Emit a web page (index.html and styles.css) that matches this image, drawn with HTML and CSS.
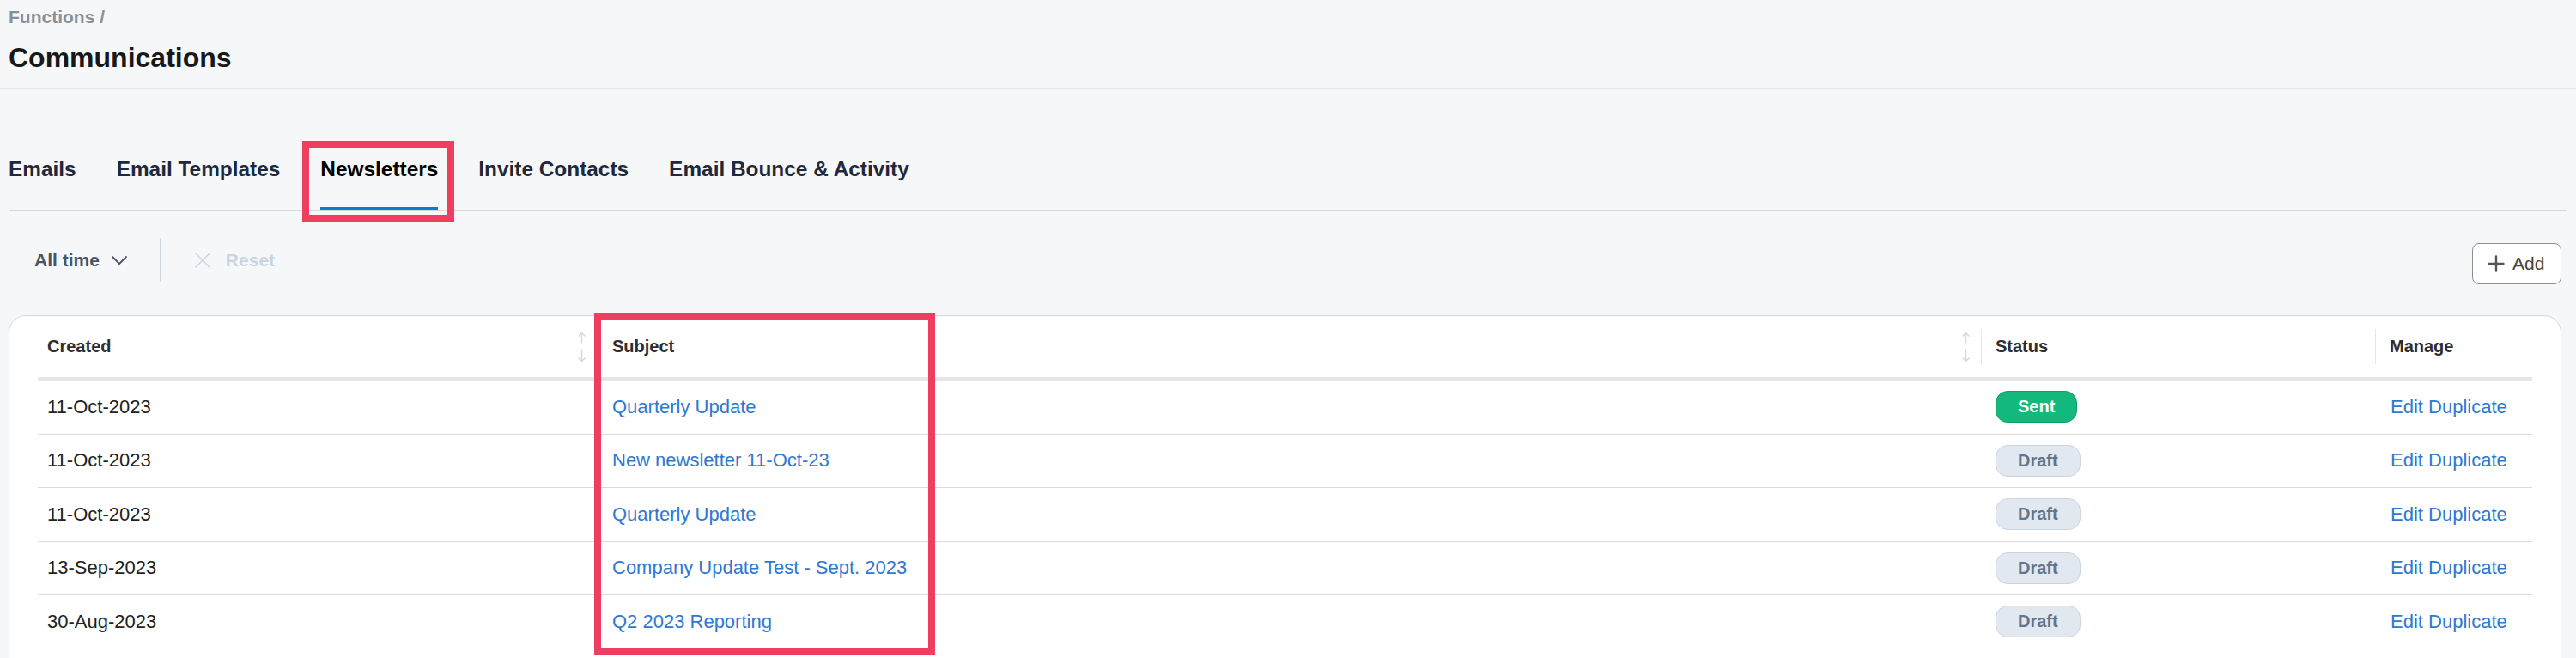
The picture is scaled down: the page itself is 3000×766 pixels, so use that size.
FILE: index.html
```html
<!DOCTYPE html>
<html lang="en">
<head>
<meta charset="utf-8">
<title>Communications</title>
<link rel="stylesheet" href="styles.css">
</head>
<body>
<header class="page-header">
  <div class="crumb">Functions /</div>
  <h1 class="title">Communications</h1>
</header>

<nav class="tabs">
  <a class="tab">Emails</a>
  <a class="tab">Email Templates</a>
  <a class="tab active">Newsletters</a>
  <a class="tab">Invite Contacts</a>
  <a class="tab">Email Bounce &amp; Activity</a>
</nav>

<div class="toolbar">
  <div class="filters">
    <span class="filter">All time
      <svg class="chev" width="18" height="10" viewBox="0 0 18 10"><polyline points="1,1 9,9 17,1" fill="none" stroke="#475569" stroke-width="1.8" stroke-linecap="round" stroke-linejoin="round"/></svg>
    </span>
    <span class="vdiv"></span>
    <span class="reset">
      <svg width="18" height="18" viewBox="0 0 18 18"><path d="M1 1 L17 17 M17 1 L1 17" stroke="#cbd5e1" stroke-width="1.6" stroke-linecap="round"/></svg>
      Reset
    </span>
  </div>
  <button class="add">
    <svg width="20" height="20" viewBox="0 0 20 20"><path d="M10 1.5 V18.5 M1.5 10 H18.5" stroke="#555" stroke-width="2.4" stroke-linecap="round"/></svg>
    Add
  </button>
</div>

<section class="card">
  <table class="grid">
    <colgroup>
      <col class="c-created">
      <col class="c-subject">
      <col class="c-status">
      <col class="c-manage">
    </colgroup>
    <thead>
      <tr>
        <th><div class="thc first">Created
          <svg class="sort" width="11" height="36" viewBox="0 0 11 36"><path d="M5.5 1.5 V13 M2 5 L5.5 1.5 L9 5 M5.5 21 V34.5 M2 31 L5.5 34.5 L9 31" fill="none" stroke="#d9d9d9" stroke-width="1.5" stroke-linecap="round" stroke-linejoin="round"/></svg>
        </div></th>
        <th><div class="thc">Subject
          <svg class="sort" width="11" height="36" viewBox="0 0 11 36"><path d="M5.5 1.5 V13 M2 5 L5.5 1.5 L9 5 M5.5 21 V34.5 M2 31 L5.5 34.5 L9 31" fill="none" stroke="#d9d9d9" stroke-width="1.5" stroke-linecap="round" stroke-linejoin="round"/></svg>
        </div></th>
        <th><div class="thc">Status</div></th>
        <th><div class="thc">Manage</div></th>
      </tr>
    </thead>
    <tbody>
      <tr>
        <td>11-Oct-2023</td>
        <td><a class="link">Quarterly Update</a></td>
        <td><span class="pill sent">Sent</span></td>
        <td><a class="link">Edit</a> <a class="link">Duplicate</a></td>
      </tr>
      <tr>
        <td>11-Oct-2023</td>
        <td><a class="link">New newsletter 11-Oct-23</a></td>
        <td><span class="pill draft">Draft</span></td>
        <td><a class="link">Edit</a> <a class="link">Duplicate</a></td>
      </tr>
      <tr>
        <td>11-Oct-2023</td>
        <td><a class="link">Quarterly Update</a></td>
        <td><span class="pill draft">Draft</span></td>
        <td><a class="link">Edit</a> <a class="link">Duplicate</a></td>
      </tr>
      <tr>
        <td>13-Sep-2023</td>
        <td><a class="link">Company Update Test - Sept. 2023</a></td>
        <td><span class="pill draft">Draft</span></td>
        <td><a class="link">Edit</a> <a class="link">Duplicate</a></td>
      </tr>
      <tr>
        <td>30-Aug-2023</td>
        <td><a class="link">Q2 2023 Reporting</a></td>
        <td><span class="pill draft">Draft</span></td>
        <td><a class="link">Edit</a> <a class="link">Duplicate</a></td>
      </tr>
    </tbody>
  </table>
</section>

<div class="annot annot-tab"></div>
<div class="annot annot-col"></div>
</body>
</html>
```

FILE: styles.css
```css
* { box-sizing: border-box; }

html, body {
  margin: 0;
  padding: 0;
}

body {
  position: relative;
  width: 3000px;
  height: 766px;
  overflow: hidden;
  background: #f6f7f9;
  font-family: "Liberation Sans", Arial, Helvetica, sans-serif;
  color: #222;
}

/* Header */
.page-header {
  padding: 8px 10px 16px;
  border-bottom: 1px solid #e3e5e8;
}

.crumb {
  font-size: 21px;
  line-height: 24px;
  font-weight: 700;
  color: #8a9099;
}

.title {
  margin: 15px 0 0;
  font-size: 32px;
  line-height: 40px;
  font-weight: 700;
  color: #17181a;
}

/* Tabs */
.tabs {
  display: flex;
  gap: 47px;
  margin: 79px 10px 0;
  border-bottom: 1px solid #d6d8dc;
}

.tab {
  font-size: 24.4px;
  line-height: 28px;
  font-weight: 700;
  color: #1e293b;
  padding-bottom: 30px;
  border-bottom: 4px solid transparent;
}

.tab.active {
  color: #000;
  border-bottom-color: #0a7ec2;
}

/* Toolbar */
.toolbar {
  display: flex;
  justify-content: space-between;
  align-items: flex-start;
  padding: 31px 17px 36px 10px;
}

.filters {
  display: flex;
  align-items: center;
  height: 51px;
  padding-left: 30px;
}

.filter {
  display: flex;
  align-items: center;
  gap: 14px;
  font-size: 21px;
  line-height: 24px;
  font-weight: 700;
  color: #475569;
}

.vdiv {
  width: 1px;
  height: 51px;
  margin-left: 38px;
  background: #cfd5dd;
}

.reset {
  display: flex;
  align-items: center;
  gap: 18px;
  margin-left: 40px;
  font-size: 21px;
  line-height: 24px;
  font-weight: 700;
  color: #cbd5e1;
}

.add {
  display: flex;
  align-items: center;
  gap: 9px;
  margin-top: 6px;
  width: 104px;
  height: 48px;
  padding: 0 0 0 17px;
  background: #fff;
  border: 1px solid #8e8e8e;
  border-radius: 8px;
  font-family: "Liberation Sans", Arial, Helvetica, sans-serif;
  font-size: 21px;
  color: #444;
}

/* Card & table */
.card {
  margin: 0 17px 0 10px;
  padding: 0 33px 60px;
  background: #fff;
  border: 1px solid #d5d9de;
  border-radius: 20px;
}

.grid {
  width: 100%;
  table-layout: fixed;
  border-collapse: separate;
  border-spacing: 0;
}

.c-created { width: 652px; }
.c-subject { width: 1611px; }
.c-status { width: 459px; }
.c-manage { width: 183px; }

.grid th {
  height: 75px;
  padding: 0;
  text-align: left;
  vertical-align: middle;
  border-bottom: 4px solid #e6e6e6;
  font-size: 20px;
  font-weight: 700;
  color: #2e2e2e;
}

.thc {
  display: flex;
  align-items: center;
  justify-content: space-between;
  height: 41px;
  padding: 0 12px 0 16px;
  border-left: 1px solid #e6e6e6;
}

.thc.first {
  border-left: none;
  padding-left: 11px;
  padding-right: 13px;
}

.grid td {
  height: 62.5px;
  padding: 0 0 0 17px;
  vertical-align: middle;
  border-bottom: 1px solid #dadada;
  font-size: 22px;
  color: #222;
  white-space: nowrap;
}

.grid td:first-child {
  padding-left: 11px;
}

.grid td:last-child {
  padding-left: 18px;
}

.link {
  color: #2f78d2;
  text-decoration: none;
}

.pill {
  display: inline-block;
  padding: 0 25px;
  font-size: 20px;
  line-height: 35px;
  font-weight: 700;
  border: 1px solid;
  border-radius: 14px;
}

.pill.sent {
  background: #13b97c;
  border-color: #0f9c69;
  color: #fff;
}

.pill.draft {
  background: #e2e8f0;
  border-color: #cbd5e1;
  color: #64748b;
}

/* Annotation overlays */
.annot {
  position: absolute;
  border: 8px solid #ee3f61;
  pointer-events: none;
}

.annot-tab {
  left: 352px;
  top: 164px;
  width: 177px;
  height: 94px;
}

.annot-col {
  left: 692px;
  top: 364px;
  width: 397px;
  height: 398px;
}
```
